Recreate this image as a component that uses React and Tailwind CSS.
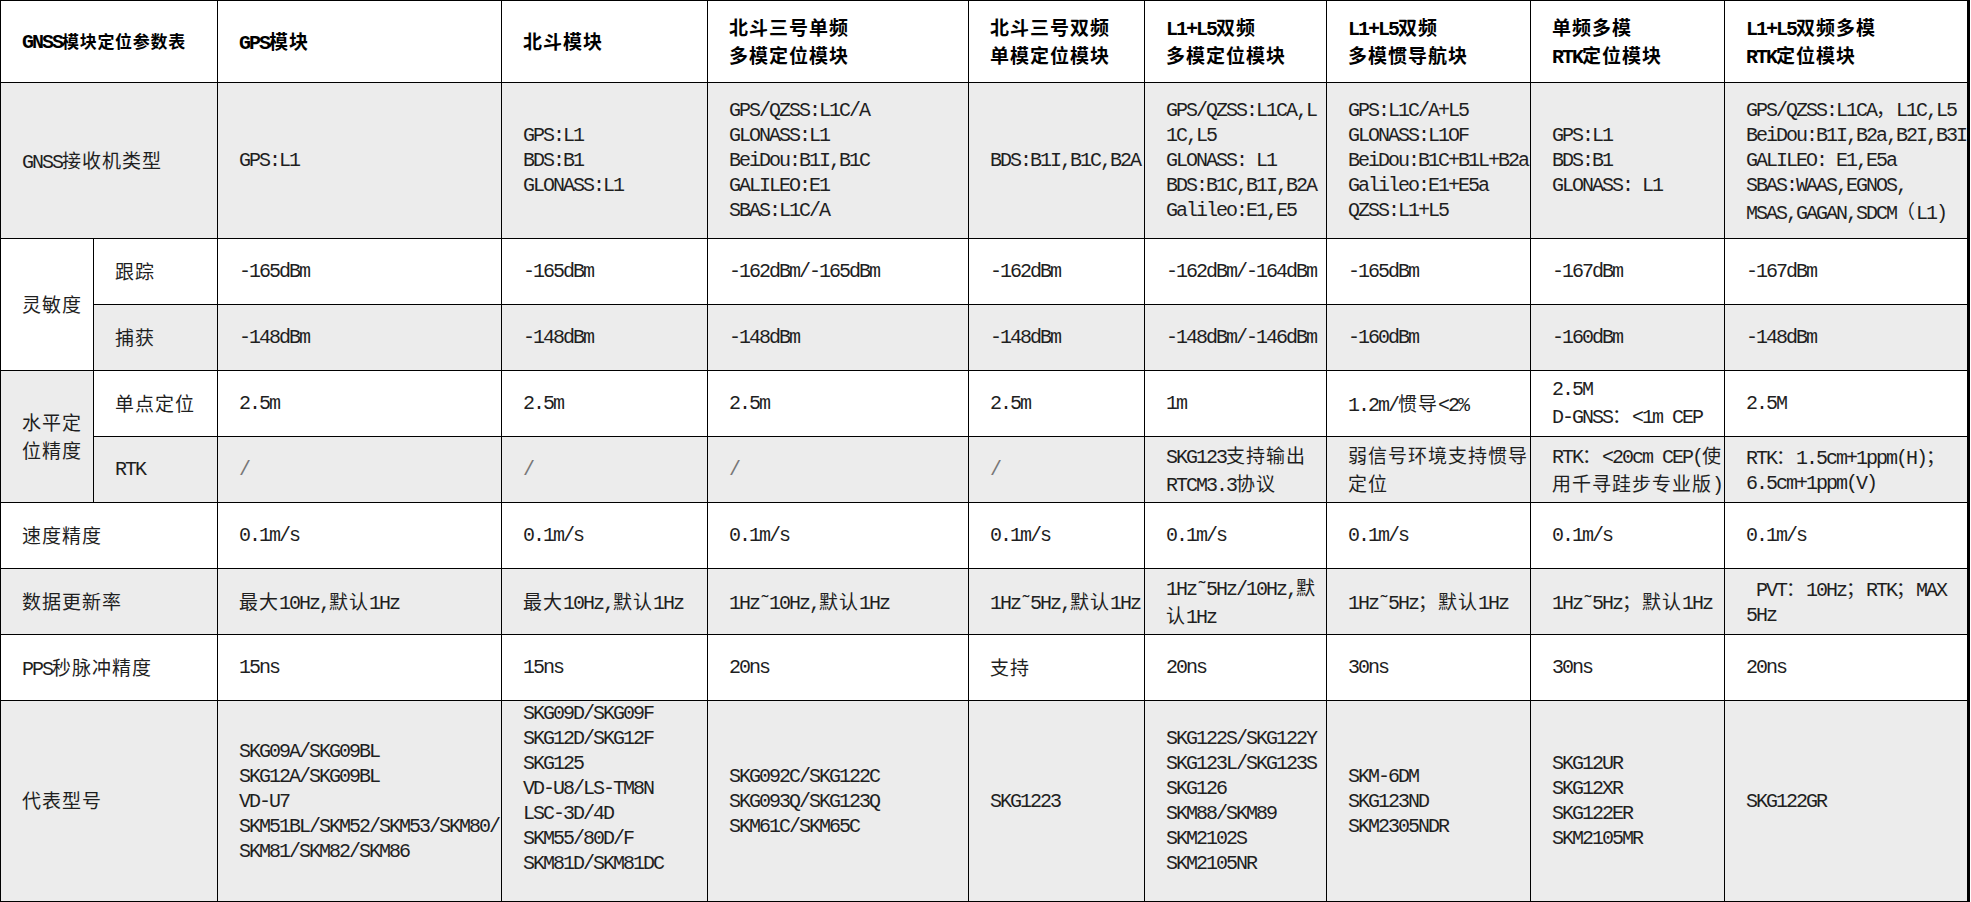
import React from "react";

const CJK = /([\u2E80-\u9FFF\u3000-\u303F\uFF00-\uFFEF]+)/;
const CJK_TEST = /[\u2E80-\u9FFF\u3000-\u303F\uFF00-\uFFEF]/;

function T({ text, small }) {
  const lines = text.split("\n");
  return lines.map((line, i) => (
    <div key={i} className="whitespace-pre">
      {line === ""
        ? "\u00a0"
        : line.split(CJK).map((part, j) =>
            part === "" ? null : CJK_TEST.test(part) ? (
              <span
                key={j}
                className={
                  small
                    ? "font-['Noto_Sans_CJK_SC',sans-serif] text-[17px] tracking-[0.7px]"
                    : "font-['Noto_Sans_CJK_SC',sans-serif] text-[19px] tracking-[1px]"
                }
              >
                {part}
              </span>
            ) : (
              <span key={j}>{part}</span>
            )
          )}
    </div>
  ));
}

function C({ t, gray, colSpan, rowSpan, head, muted, small }) {
  return (
    <td
      colSpan={colSpan}
      rowSpan={rowSpan}
      className={
        "border border-black pl-[21px] pr-[2px] py-0 align-middle text-left " +
        (gray ? "bg-[#ececec] " : "bg-white ") +
        (head ? "font-bold text-black " : "font-normal ") +
        (muted ? "text-[#777] " : "")
      }
    >
      <T text={t} small={small} />
    </td>
  );
}

const header = [
  "GPS模块",
  "北斗模块",
  "北斗三号单频\n多模定位模块",
  "北斗三号双频\n单模定位模块",
  "L1+L5双频\n多模定位模块",
  "L1+L5双频\n多模惯导航块",
  "单频多模\nRTK定位模块",
  "L1+L5双频多模\nRTK定位模块",
];

const receiver = [
  "GPS:L1",
  "GPS:L1\nBDS:B1\nGLONASS:L1",
  "GPS/QZSS:L1C/A\nGLONASS:L1\nBeiDou:B1I,B1C\nGALILEO:E1\nSBAS:L1C/A",
  "BDS:B1I,B1C,B2A",
  "GPS/QZSS:L1CA,L\n1C,L5\nGLONASS: L1\nBDS:B1C,B1I,B2A\nGalileo:E1,E5",
  "GPS:L1C/A+L5\nGLONASS:L1OF\nBeiDou:B1C+B1L+B2a\nGalileo:E1+E5a\nQZSS:L1+L5",
  "GPS:L1\nBDS:B1\nGLONASS: L1",
  "GPS/QZSS:L1CA，L1C,L5\nBeiDou:B1I,B2a,B2I,B3I\nGALILEO: E1,E5a\nSBAS:WAAS,EGNOS,\nMSAS,GAGAN,SDCM（L1)",
];

const track = ["-165dBm", "-165dBm", "-162dBm/-165dBm", "-162dBm", "-162dBm/-164dBm", "-165dBm", "-167dBm", "-167dBm"];
const acquire = ["-148dBm", "-148dBm", "-148dBm", "-148dBm", "-148dBm/-146dBm", "-160dBm", "-160dBm", "-148dBm"];
const single = ["2.5m", "2.5m", "2.5m", "2.5m", "1m", "1.2m/惯导<2%", "2.5M\nD-GNSS：<1m CEP", "2.5M"];
const rtk = [
  "/",
  "/",
  "/",
  "/",
  "SKG123支持输出\nRTCM3.3协议",
  "弱信号环境支持惯导\n定位",
  "RTK：<20cm CEP(使\n用千寻跬步专业版)",
  "RTK：1.5cm+1ppm(H)；\n6.5cm+1ppm(V)",
];
const speed = Array(8).fill("0.1m/s");
const rate = [
  "最大10Hz,默认1Hz",
  "最大10Hz,默认1Hz",
  "1Hz˜10Hz,默认1Hz",
  "1Hz˜5Hz,默认1Hz",
  "1Hz˜5Hz/10Hz,默\n认1Hz",
  "1Hz˜5Hz；默认1Hz",
  "1Hz˜5Hz；默认1Hz",
  " PVT：10Hz；RTK；MAX\n5Hz",
];
const pps = ["15ns", "15ns", "20ns", "支持", "20ns", "30ns", "30ns", "20ns"];
const models = [
  "SKG09A/SKG09BL\nSKG12A/SKG09BL\nVD-U7\nSKM51BL/SKM52/SKM53/SKM80/\nSKM81/SKM82/SKM86",
  "SKG09D/SKG09F\nSKG12D/SKG12F\nSKG125\nVD-U8/LS-TM8N\nLSC-3D/4D\nSKM55/80D/F\nSKM81D/SKM81DC\n",
  "SKG092C/SKG122C\nSKG093Q/SKG123Q\nSKM61C/SKM65C",
  "SKG1223",
  "SKG122S/SKG122Y\nSKG123L/SKG123S\nSKG126\nSKM88/SKM89\nSKM2102S\nSKM2105NR",
  "SKM-6DM\nSKG123ND\nSKM2305NDR",
  "SKG12UR\nSKG12XR\nSKG122ER\nSKM2105MR",
  "SKG122GR",
];

export default function App() {
  return (
    <div className="w-[1971px] h-[902px] bg-white overflow-hidden">
      <table className="table-fixed border-collapse w-[1970px] border-t border-l border-r-[3px] border-b-[2px] border-black font-['Liberation_Mono','Noto_Sans_CJK_SC',monospace] text-[20px] tracking-[-2px] leading-[25px] text-[#1f1f1f]">
        <colgroup>
          <col className="w-[93px]" />
          <col className="w-[124px]" />
          <col className="w-[284px]" />
          <col className="w-[206px]" />
          <col className="w-[261px]" />
          <col className="w-[176px]" />
          <col className="w-[182px]" />
          <col className="w-[204px]" />
          <col className="w-[194px]" />
          <col className="w-[244px]" />
        </colgroup>
        <tbody>
          <tr className="h-[82px]">
            <C t="GNSS模块定位参数表" colSpan={2} head small />
            {header.map((h, i) => (
              <C key={i} t={h} head />
            ))}
          </tr>
          <tr className="h-[156px]">
            <C t="GNSS接收机类型" colSpan={2} gray />
            {receiver.map((v, i) => (
              <C key={i} t={v} gray />
            ))}
          </tr>
          <tr className="h-[66px]">
            <C t="灵敏度" rowSpan={2} />
            <C t="跟踪" />
            {track.map((v, i) => (
              <C key={i} t={v} />
            ))}
          </tr>
          <tr className="h-[66px]">
            <C t="捕获" gray />
            {acquire.map((v, i) => (
              <C key={i} t={v} gray />
            ))}
          </tr>
          <tr className="h-[66px]">
            <C t={"水平定\n位精度"} rowSpan={2} gray />
            <C t="单点定位" />
            {single.map((v, i) => (
              <C key={i} t={v} />
            ))}
          </tr>
          <tr className="h-[66px]">
            <C t="RTK" gray />
            {rtk.map((v, i) => (
              <C key={i} t={v} gray muted={v === "/"} />
            ))}
          </tr>
          <tr className="h-[66px]">
            <C t="速度精度" colSpan={2} />
            {speed.map((v, i) => (
              <C key={i} t={v} />
            ))}
          </tr>
          <tr className="h-[66px]">
            <C t="数据更新率" colSpan={2} gray />
            {rate.map((v, i) => (
              <C key={i} t={v} gray />
            ))}
          </tr>
          <tr className="h-[66px]">
            <C t="PPS秒脉冲精度" colSpan={2} />
            {pps.map((v, i) => (
              <C key={i} t={v} />
            ))}
          </tr>
          <tr className="h-[200px]">
            <C t="代表型号" colSpan={2} gray />
            {models.map((v, i) => (
              <C key={i} t={v} gray />
            ))}
          </tr>
        </tbody>
      </table>
    </div>
  );
}
